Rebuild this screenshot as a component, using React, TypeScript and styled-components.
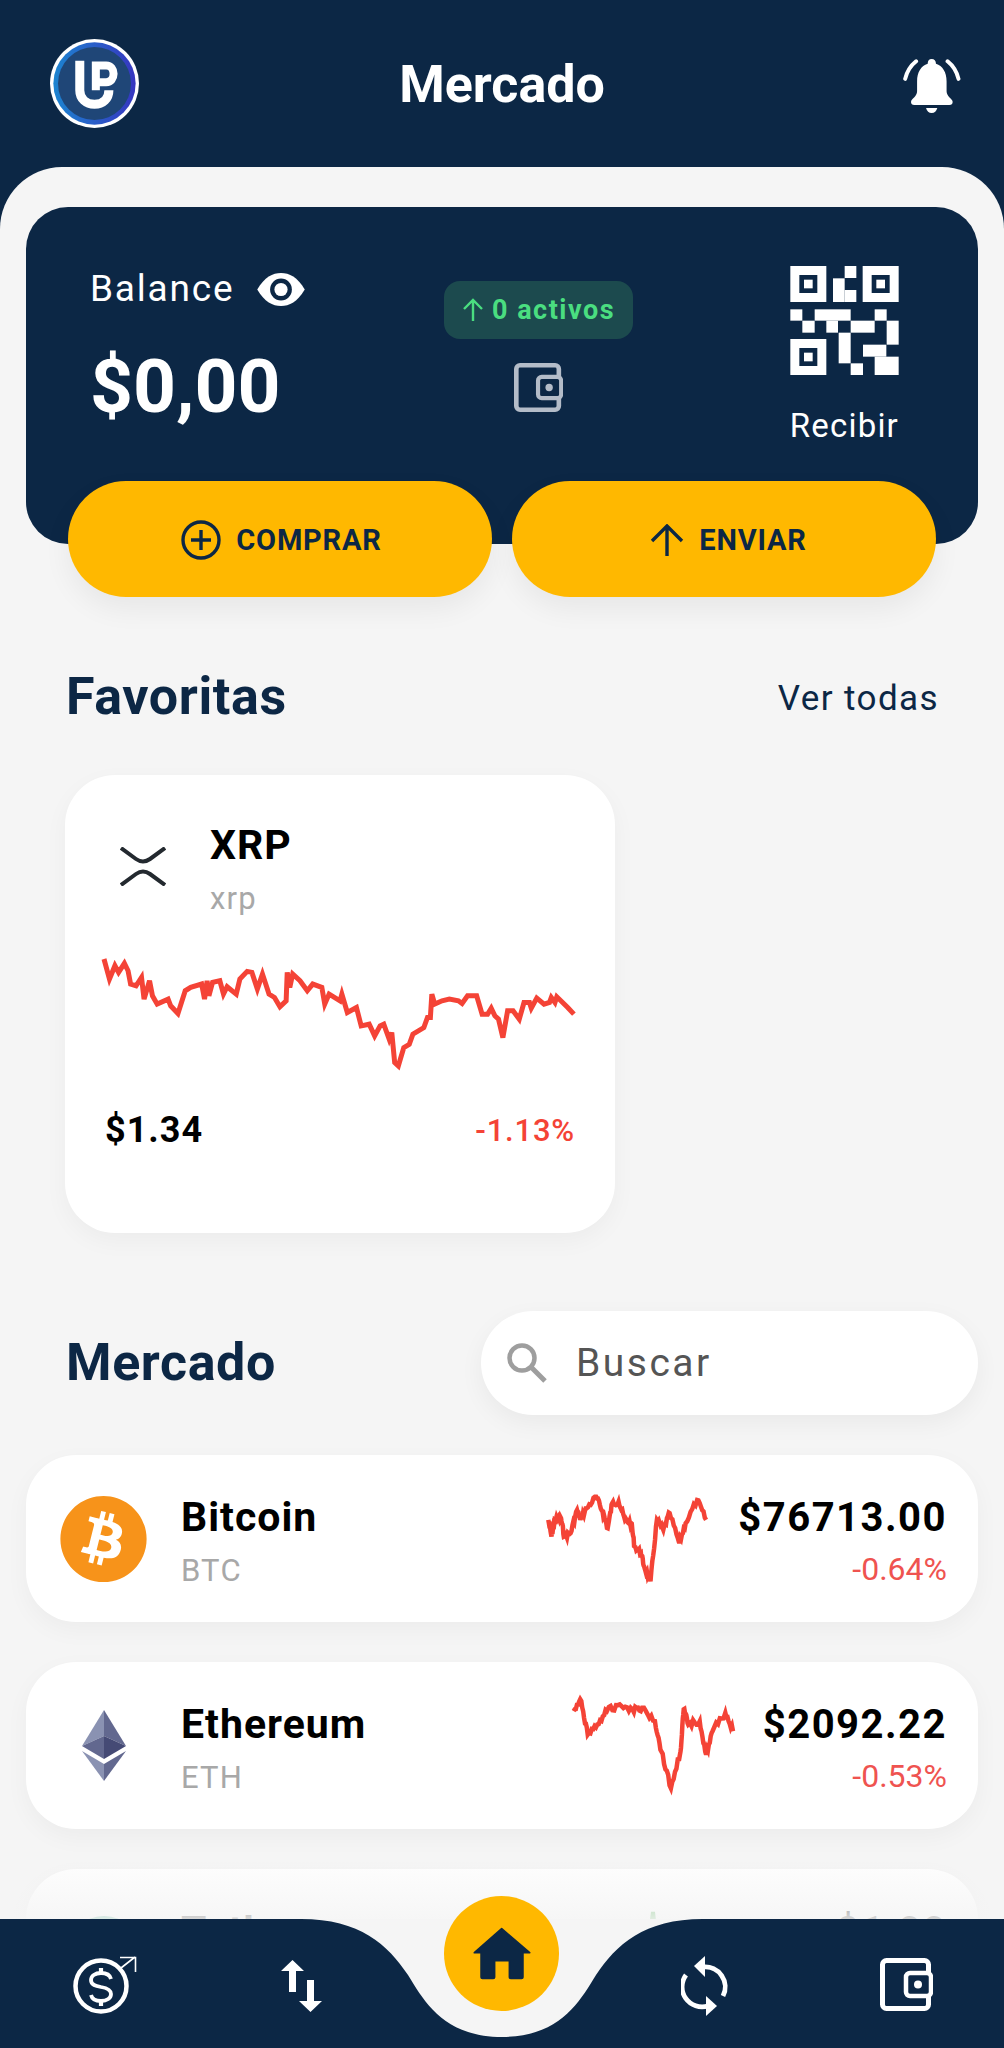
import React from "react";
import styled, { createGlobalStyle } from "styled-components";
import { FaBitcoin } from "react-icons/fa";

const NAVY = "#0c2745";
const YELLOW = "#ffb800";
const RED = "#f44336";
const BG = "#f5f5f5";

const Global = createGlobalStyle`
  html, body { margin: 0; padding: 0; background: ${NAVY}; }
  * { box-sizing: border-box; }
  body { font-family: Roboto, "Liberation Sans", sans-serif; }
`;

const Screen = styled.div`
  position: relative;
  width: 1004px;
  height: 2048px;
  overflow: hidden;
  background: ${NAVY};
  display: flex;
  flex-direction: column;
`;
const Header = styled.header`
  height: 167px;
  flex: none;
  padding: 39px 50px 0 50px;
  display: grid;
  grid-template-columns: 89px 1fr 89px;
  align-items: start;
`;
const Title = styled.h1`
  margin: 18px 0 0;
  text-align: center;
  color: #fff;
  font-size: 52px;
  line-height: 56px;
  font-weight: 700;
`;
const BellBox = styled.div`
  margin: 18px -7px 0 0;
  display: flex;
  justify-content: flex-end;
`;
const Sheet = styled.main`
  flex: 1;
  background: ${BG};
  border-radius: 62px 62px 0 0;
  padding: 40px 26px 0;
  display: flex;
  flex-direction: column;
`;
const BalanceCard = styled.section`
  height: 337px;
  flex: none;
  background: ${NAVY};
  border-radius: 42px;
  padding: 59px 42px 0;
  position: relative;
  display: flex;
  flex-direction: column;
  justify-content: space-between;
`;
const BalanceTop = styled.div`
  display: grid;
  grid-template-columns: 354px 189px 1fr;
  padding-left: 22px;
  padding-right: 37px;
  height: 170px;
`;
const BalanceLeft = styled.div`
  display: flex;
  flex-direction: column;
`;
const BalanceLabel = styled.div`
  display: flex;
  align-items: center;
  gap: 23px;
  color: #fff;
  font-size: 37px;
  line-height: 46px;
  letter-spacing: 1.8px;
`;
const Amount = styled.div`
  margin-top: 31px;
  color: #fff;
  font-size: 75px;
  line-height: 86px;
  font-weight: 700;
`;
const BalanceMid = styled.div`
  padding-top: 15px;
  display: flex;
  flex-direction: column;
  align-items: center;
  gap: 24px;
`;
const Badge = styled.div`
  width: 189px;
  height: 58px;
  border-radius: 16px;
  background: #1c4a4e;
  color: #4ade80;
  display: flex;
  align-items: center;
  justify-content: center;
  gap: 8px;
  font-size: 27px;
  font-weight: 700;
  letter-spacing: 1.5px;
`;
const Receive = styled.div`
  display: flex;
  flex-direction: column;
  align-items: flex-end;
  color: #fff;
  font-size: 33px;
  letter-spacing: 1.2px;
  gap: 31px;
`;
const ActionRow = styled.div`
  display: grid;
  grid-template-columns: 424px 424px;
  gap: 20px;
  margin-bottom: -53px;
`;
const ActionButton = styled.button<{ $nudge: number }>`
  height: 116px;
  border: 0;
  padding: 2px 0 0 ${(p) => p.$nudge}px;
  border-radius: 58px;
  background: ${YELLOW};
  color: ${NAVY};
  font: 700 29px/1 Roboto, sans-serif;
  letter-spacing: 0.8px;
  display: flex;
  align-items: center;
  justify-content: center;
  gap: 15px;
  box-shadow: 0 12px 28px rgba(0, 0, 0, 0.06);
`;
const SectionHead = styled.div<{ $top: number }>`
  margin-top: ${(p) => p.$top}px;
  padding: 0 39px 0 40px;
  display: flex;
  align-items: center;
  justify-content: space-between;
  flex: none;
`;
const SectionTitle = styled.h2`
  margin: 0;
  color: ${NAVY};
  font-size: 52px;
  line-height: 56px;
  font-weight: 700;
  letter-spacing: 0.6px;
`;
const SeeAll = styled.span`
  margin-top: 3px;
  color: ${NAVY};
  font-size: 35px;
  letter-spacing: 1.4px;
`;
const FavoriteCard = styled.article`
  margin: 50px 0 0 39px;
  width: 550px;
  height: 458px;
  flex: none;
  background: #fff;
  border-radius: 50px;
  padding: 0 40px;
  display: flex;
  flex-direction: column;
  box-shadow: 0 8px 24px rgba(0, 0, 0, 0.04);
`;
const FavHead = styled.div`
  display: flex;
  align-items: flex-start;
  padding: 47px 0 0 15px;
  gap: 44px;
  height: 184px;
`;
const XrpBox = styled.div`
  margin-top: 25px;
  display: flex;
`;
const FavNames = styled.div`
  display: flex;
  flex-direction: column;
  gap: 12px;
`;
const CardName = styled.div`
  color: #000;
  font-size: 41px;
  line-height: 47px;
  font-weight: 700;
  letter-spacing: 1px;
`;
const CardSymbol = styled.div`
  color: #a8a8a8;
  font-size: 31px;
  line-height: 36px;
  letter-spacing: 1.2px;
`;
const FavFoot = styled.div`
  margin-top: 43px;
  display: flex;
  justify-content: space-between;
  align-items: center;
`;
const FavPrice = styled.span`
  color: #000;
  font-size: 36px;
  font-weight: 700;
  letter-spacing: 1px;
`;
const FavChange = styled.span`
  color: ${RED};
  font-size: 31px;
  font-weight: 500;
  letter-spacing: 0.8px;
`;
const SearchBox = styled.div`
  width: 497px;
  height: 104px;
  margin-right: -39px;
  border-radius: 52px;
  background: #fff;
  display: flex;
  align-items: center;
  gap: 28px;
  padding-left: 25px;
  color: #555;
  font-size: 39px;
  letter-spacing: 2.5px;
  box-shadow: 0 8px 24px rgba(0, 0, 0, 0.05);
`;
const List = styled.div`
  margin-top: 40px;
  display: flex;
  flex-direction: column;
  gap: 40px;
`;
const Row = styled.article`
  height: 167px;
  flex: none;
  background: #fff;
  border-radius: 50px;
  padding: 0 31px 0 33px;
  display: flex;
  align-items: center;
  box-shadow: 0 8px 24px rgba(0, 0, 0, 0.04);
`;
const LogoSlot = styled.div`
  width: 89px;
  height: 89px;
  flex: none;
  display: flex;
  align-items: center;
  justify-content: center;
  color: #f7931a;
`;
const TetherMark = styled.div`
  width: 74px;
  height: 74px;
  flex: none;
  border-radius: 50%;
  background: #26a17b;
`;
const RowNames = styled.div`
  margin: 5px 0 0 33px;
  flex: 1;
  display: flex;
  flex-direction: column;
  gap: 12px;
`;
const RowPrice = styled.div`
  margin: 3px 0 0 30px;
  display: flex;
  flex-direction: column;
  align-items: flex-end;
  gap: 10px;
`;
const PriceValue = styled.div`
  color: #000;
  font-size: 40px;
  line-height: 47px;
  font-weight: 700;
  letter-spacing: 1.5px;
`;
const PriceChange = styled.div`
  color: #ef5350;
  font-size: 32px;
  line-height: 36px;
`;
const Fade = styled.div`
  position: absolute;
  left: 0;
  right: 0;
  bottom: 129px;
  height: 68px;
  background: linear-gradient(rgba(245, 245, 245, 0), rgba(245, 245, 245, 0.88));
`;
const Nav = styled.nav`
  position: absolute;
  left: 0;
  right: 0;
  bottom: 0;
  height: 129px;
  display: grid;
  grid-template-columns: repeat(5, 1fr);
  justify-items: center;
  align-items: start;
`;
const NavShape = styled.svg`
  position: absolute;
  inset: 0;
`;
const NavItem = styled.div<{ $top: number; $shift?: number }>`
  position: relative;
  margin-top: ${(p) => p.$top}px;
  margin-left: ${(p) => p.$shift ?? 0}px;
  display: flex;
`;
const HomeButton = styled.div`
  position: relative;
  width: 115px;
  height: 115px;
  margin-top: -23px;
  border-radius: 50%;
  background: ${YELLOW};
  display: flex;
  align-items: center;
  justify-content: center;
`;
const Spark = styled.svg`
  flex: none;
  display: block;
  overflow: visible;
`;
const FavSpark = styled(Spark)`
  margin-left: -1px;
`;

const xrpLine: [number, number][] = [[122,565],[137,625],[152,585],[162,605],[178,578],[188,600],[195,640],[210,645],[225,620],[232,685],[247,630],[255,675],[268,700],[298,685],[305,705],[325,728],[345,660],[360,650],[390,640],[398,685],[405,630],[410,675],[420,635],[440,630],[450,670],[460,648],[485,670],[495,625],[515,602],[528,605],[543,655],[557,610],[575,670],[590,680],[605,708],[622,690],[625,605],[632,650],[640,610],[660,630],[680,660],[695,640],[720,650],[728,700],[740,670],[770,690],[775,670],[790,725],[815,710],[828,765],[850,760],[865,795],[880,765],[890,760],[905,805],[912,785],[920,875],[930,885],[945,830],[960,820],[970,790],[1000,770],[1010,740],[1018,740],[1022,670],[1030,700],[1050,690],[1070,685],[1095,690],[1105,698],[1120,675],[1145,675],[1160,730],[1175,730],[1185,712],[1195,735],[1205,745],[1217,800],[1230,720],[1245,720],[1262,745],[1275,695],[1290,695],[1295,712],[1310,682],[1330,700],[1345,695],[1350,680],[1360,695],[1365,678],[1395,710],[1412,730]];
const btcLine: [number, number][] = [[855,240],[860,290],[865,240],[875,235],[880,290],[890,280],[900,210],[905,240],[915,205],[930,170],[940,215],[948,265],[955,190],[965,185],[975,240],[985,250],[990,320],[1000,340],[1005,380],[1015,425],[1025,240],[1035,270],[1045,220],[1060,310],[1070,250],[1088,180],[1102,240]];
const ethLine: [number, number][] = [[893,820],[905,790],[915,890],[930,860],[945,820],[965,800],[985,815],[1000,810],[1020,850],[1030,940],[1045,1050],[1060,940],[1065,815],[1072,860],[1090,850],[1100,950],[1110,880],[1130,825],[1142,880]];
const usdtLine: [number, number][] = [[0,60],[8,0],[16,70],[50,50],[90,60],[120,45],[161,55]];

function noisy(points: [number, number][], seed: number, amp: number): [number, number][] {
  const out: [number, number][] = [];
  let s = seed;
  const rnd = () => {
    s = (s * 9301 + 49297) % 233280;
    return s / 233280 - 0.5;
  };
  points.forEach((p, i) => {
    const n = points[i + 1];
    out.push(p);
    if (!n) return;
    for (let k = 1; k < 7; k++) {
      const t = k / 7;
      out.push([p[0] + (n[0] - p[0]) * t, p[1] + (n[1] - p[1]) * t + rnd() * amp]);
    }
  });
  return out;
}
const toPoints = (pts: [number, number][]) => pts.map((p) => p.join(",")).join(" ");

function Sparkline({ pts, box, w, h, sw, color = RED }: { pts: [number, number][]; box: string; w: number; h: number; sw: number; color?: string }) {
  return (
    <Spark width={w} height={h} viewBox={box} preserveAspectRatio="none">
      <polyline points={toPoints(pts)} fill="none" stroke={color} strokeWidth={sw} vectorEffect="non-scaling-stroke" />
    </Spark>
  );
}

const Logo = () => (
  <svg width="89" height="89" viewBox="60 59 266 266">
    <defs>
      <linearGradient id="ring" x1="0" x2="1" y1="0" y2="0">
        <stop offset="0" stopColor="#1c84d0" />
        <stop offset="1" stopColor="#3636c0" />
      </linearGradient>
    </defs>
    <circle cx="193" cy="192" r="133" fill="#fff" />
    <circle cx="193" cy="192" r="123" fill="url(#ring)" />
    <circle cx="193" cy="192" r="109" fill="#1f4677" />
    <g fill="none" stroke="#fff" strokeWidth="27">
      <path d="M149 124V212C149 238 168 254 193 254C218 254 236 238 236 212" />
      <path d="M197 212V138H228C242 138 250 150 250 163C250 176 242 188 228 188H197" strokeWidth="24" />
    </g>
  </svg>
);
const Bell = () => (
  <svg width="58" height="57" viewBox="36 32 174 172">
    <path fill="#fff" d="M122 38c-8 0-12 6-12 14C90 58 78 78 78 105V135C78 150 62 158 60 165Q58 177 70 177H175Q187 177 185 165C183 158 167 150 167 135V105C167 78 155 58 135 52C135 44 130 38 122 38Z" />
    <path fill="#fff" d="M105 186H139Q135 201 122 201Q109 201 105 186Z" />
    <path fill="none" stroke="#fff" strokeWidth="12" strokeLinecap="round" d="M75 45Q50 65 42 98M170 45Q195 65 203 98" />
  </svg>
);
const Eye = () => (
  <svg width="48" height="33" viewBox="48 38 144 100">
    <path fill="#fff" d="M48 88C70 50 95 38 120 38C145 38 170 50 192 88C170 126 145 138 120 138C95 138 70 126 48 88Z" />
    <circle cx="120" cy="88" r="33" fill={NAVY} />
    <circle cx="120" cy="88" r="20" fill="#fff" />
  </svg>
);
const Wallet = ({ color, size }: { color: string; size: number }) => (
  <svg width={size} height={size} viewBox="0 0 53 53">
    <rect x="2.500" y="2.500" width="46" height="48" rx="4" fill="none" stroke={color} strokeWidth="5" />
    <rect x="26" y="15" width="25" height="23" rx="4" fill={NAVY} stroke={color} strokeWidth="4.500" />
    <circle cx="38" cy="26.500" r="4" fill={color} />
  </svg>
);
const Finder = ({ x, y }: { x: number; y: number }) => (
  <g>
    <rect x={x} y={y} width="108" height="108" fill="#fff" />
    <rect x={x + 27} y={y + 27} width="54" height="54" fill={NAVY} />
    <rect x={x + 41} y={y + 41} width="26" height="26" fill="#fff" />
  </g>
);
const Qr = () => (
  <svg width="109" height="109" viewBox="57 48 325 327">
    <Finder x={57} y={48} />
    <Finder x={274} y={48} />
    <Finder x={57} y={267} />
    <g fill="#fff">
      <rect x="220" y="48" width="35" height="36" />
      <rect x="185" y="85" width="35" height="71" />
      <rect x="220" y="120" width="35" height="36" />
      <rect x="57" y="178" width="36" height="34" />
      <rect x="130" y="178" width="108" height="34" />
      <rect x="310" y="178" width="36" height="34" />
      <rect x="93" y="212" width="37" height="36" />
      <rect x="165" y="212" width="35" height="36" />
      <rect x="238" y="212" width="72" height="36" />
      <rect x="346" y="212" width="36" height="72" />
      <rect x="202" y="248" width="36" height="92" />
      <rect x="275" y="284" width="70" height="36" />
      <rect x="310" y="320" width="72" height="55" />
      <rect x="238" y="340" width="37" height="35" />
    </g>
  </svg>
);
const XrpMark = () => (
  <svg width="46" height="39" viewBox="0 0 46 39" fill="none" stroke="#23292f" strokeWidth="4">
    <path d="M1 1L16 12Q23 17 30 12L45 1" />
    <path d="M1 38L16 27Q23 22 30 27L45 38" />
  </svg>
);
const UpSmall = () => (
  <svg width="22" height="24" viewBox="0 0 22 24" fill="none" stroke="#4ade80" strokeWidth="2.400">
    <path d="M11 23V2M2 11L11 2L20 11" />
  </svg>
);
const PlusCircle = () => (
  <svg width="40" height="40" viewBox="0 0 40 40" fill="none" stroke={NAVY} strokeWidth="3.400">
    <circle cx="20" cy="20" r="18" />
    <path d="M20 10V30M10 20H30" />
  </svg>
);
const UpArrow = () => (
  <svg width="34" height="32" viewBox="0 0 34 32" fill="none" stroke={NAVY} strokeWidth="3.400">
    <path d="M17 32V2M2 17L17 2L32 17" />
  </svg>
);
const SearchIcon = () => (
  <svg width="42" height="42" viewBox="0 0 42 42" fill="none" stroke="#9e9e9e" strokeWidth="4.500">
    <circle cx="16" cy="16" r="12.500" />
    <path d="M25 25L39 39" strokeWidth="5" />
  </svg>
);
const Eth = () => (
  <svg width="44" height="71" viewBox="0 0 44 71">
    <path fill="#8a92b2" d="M22 0L0 36L22 26Z" />
    <path fill="#62688f" d="M22 0V26L44 36Z" />
    <path fill="#62688f" d="M0 36L22 49V26Z" />
    <path fill="#454a75" d="M44 36L22 26V49Z" />
    <path fill="#8a92b2" d="M0 41L22 71V54Z" />
    <path fill="#62688f" d="M44 41L22 54V71Z" />
  </svg>
);
const DollarNav = () => (
  <svg width="66" height="60" viewBox="10 9 66 60" fill="none" stroke="#fff">
    <circle cx="40" cy="40" r="25.500" strokeWidth="4.500" />
    <path d="M50 33C49 29 45 27 40 27C34 27 30 30 30 34C30 39 35 40 40 41C46 42 50 44 50 48C50 52 46 55 40 55C35 55 31 53 30 49" strokeWidth="3.800" />
    <path d="M40 22V27M40 55V60" strokeWidth="4.200" />
    <path d="M60 22L74 11M59 11.500H74.500V26" strokeWidth="1.600" />
  </svg>
);
const ArrowsNav = () => (
  <svg width="42" height="54" viewBox="221 13 42 54" fill="#fff">
    <path d="M232.500 14L244 25H236V46H229V25H221Z" />
    <path d="M250.500 66L262 55H254V34H247V55H239Z" />
  </svg>
);
const SyncNav = () => (
  <svg width="48" height="62" viewBox="8 9 48 62" fill="none" stroke="#fff" strokeWidth="4.800">
    <path d="M50 50A20 20 0 0 0 30 21" />
    <path d="M13 29A20 20 0 0 0 35 60" />
    <path fill="#fff" stroke="none" d="M32 10V31L21 20Z" />
    <path fill="#fff" stroke="none" d="M33 50V70L44 60Z" />
  </svg>
);
const HomeIcon = () => (
  <svg width="58" height="53" viewBox="100 110 172 155">
    <path fill={NAVY} stroke={NAVY} strokeWidth="5" strokeLinejoin="round" d="M185 114L268 185H248V258Q248 261 244 261H212Q208 261 208 258V209H164V258Q164 261 160 261H128Q124 261 124 258V185H104Z" />
  </svg>
);

export default function App() {
  return (
    <Screen>
      <Global />
      <Header>
        <Logo />
        <Title>Mercado</Title>
        <BellBox><Bell /></BellBox>
      </Header>
      <Sheet>
        <BalanceCard>
          <BalanceTop>
            <BalanceLeft>
              <BalanceLabel>Balance <Eye /></BalanceLabel>
              <Amount>$0,00</Amount>
            </BalanceLeft>
            <BalanceMid>
              <Badge><UpSmall />0 activos</Badge>
              <Wallet color="#b4bcc8" size={49} />
            </BalanceMid>
            <Receive><Qr />Recibir</Receive>
          </BalanceTop>
          <ActionRow>
            <ActionButton $nudge={3}><PlusCircle />COMPRAR</ActionButton>
            <ActionButton $nudge={9}><UpArrow />ENVIAR</ActionButton>
          </ActionRow>
        </BalanceCard>
        <SectionHead $top={125}>
          <SectionTitle>Favoritas</SectionTitle>
          <SeeAll>Ver todas</SeeAll>
        </SectionHead>
        <FavoriteCard>
          <FavHead>
            <XrpBox><XrpMark /></XrpBox>
            <FavNames>
              <CardName>XRP</CardName>
              <CardSymbol>xrp</CardSymbol>
            </FavNames>
          </FavHead>
          <FavSpark width={471} height={107} viewBox="122 565 1293 320" preserveAspectRatio="none">
            <polyline points={toPoints(xrpLine)} fill="none" stroke={RED} strokeWidth="5" vectorEffect="non-scaling-stroke" />
          </FavSpark>
          <FavFoot>
            <FavPrice>$1.34</FavPrice>
            <FavChange>-1.13%</FavChange>
          </FavFoot>
        </FavoriteCard>
        <SectionHead $top={78}>
          <SectionTitle>Mercado</SectionTitle>
          <SearchBox><SearchIcon />Buscar</SearchBox>
        </SectionHead>
        <List>
          <Row>
            <LogoSlot><FaBitcoin size={94} /></LogoSlot>
            <RowNames>
              <CardName>Bitcoin</CardName>
              <CardSymbol>BTC</CardSymbol>
            </RowNames>
            <Sparkline pts={noisy(btcLine, 7, 18)} box="853 165 252 265" w={161} h={88} sw={4.5} />
            <RowPrice>
              <PriceValue>$76713.00</PriceValue>
              <PriceChange>-0.64%</PriceChange>
            </RowPrice>
          </Row>
          <Row>
            <LogoSlot><Eth /></LogoSlot>
            <RowNames>
              <CardName>Ethereum</CardName>
              <CardSymbol>ETH</CardSymbol>
            </RowNames>
            <Sparkline pts={noisy(ethLine, 31, 20)} box="892 790 250 265" w={160} h={89} sw={4.5} />
            <RowPrice>
              <PriceValue>$2092.22</PriceValue>
              <PriceChange>-0.53%</PriceChange>
            </RowPrice>
          </Row>
          <Row>
            <LogoSlot><TetherMark /></LogoSlot>
            <RowNames>
              <CardName>Tether</CardName>
              <CardSymbol>USDT</CardSymbol>
            </RowNames>
            <Sparkline pts={usdtLine} box="0 0 161 82" w={161} h={82} sw={4} color="#4caf50" />
            <RowPrice>
              <PriceValue>$1.00</PriceValue>
              <PriceChange>0.00%</PriceChange>
            </RowPrice>
          </Row>
        </List>
      </Sheet>
      <Fade />
      <Nav>
        <NavShape width="1004" height="129" viewBox="0 1919 1004 129">
          <rect x="0" y="1919" width="1004" height="129" fill={BG} />
          <path fill={NAVY} d="M0 1919H301C360 1919 388 1945 408 1975C425 2003 445 2037 502 2037C559 2037 579 2003 596 1975C616 1945 644 1919 703 1919H1004V2048H0Z" />
        </NavShape>
        <NavItem $top={36} $shift={8}><DollarNav /></NavItem>
        <NavItem $top={40} $shift={2}><ArrowsNav /></NavItem>
        <HomeButton><HomeIcon /></HomeButton>
        <NavItem $top={36} $shift={4}><SyncNav /></NavItem>
        <NavItem $top={39} $shift={5}><Wallet color="#fff" size={53} /></NavItem>
      </Nav>
    </Screen>
  );
}
